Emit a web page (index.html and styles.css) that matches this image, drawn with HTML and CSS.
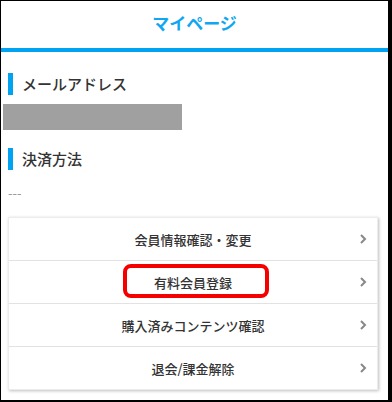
FILE: index.html
```html
<!DOCTYPE html>
<html lang="ja">
<head>
<meta charset="utf-8">
<link rel="stylesheet" href="styles.css">
</head>
<body>
<div class="frame">
  <header class="header">
    <h1 class="title">マイページ</h1>
  </header>
  <main class="content">
    <h2 class="section-title">メールアドレス</h2>
    <div class="masked"></div>
    <h2 class="section-title second">決済方法</h2>
    <p class="empty">---</p>
    <ul class="menu">
      <li class="menu-item"><span class="label">会員情報確認・変更</span><svg class="chev" width="8" height="12" viewBox="0 0 8 12"><polyline points="2,2 6,6 2,10" fill="none" stroke="#888" stroke-width="2"/></svg></li>
      <li class="menu-item"><span class="label">有料会員登録</span><svg class="chev" width="8" height="12" viewBox="0 0 8 12"><polyline points="2,2 6,6 2,10" fill="none" stroke="#888" stroke-width="2"/></svg><span class="highlight"></span></li>
      <li class="menu-item"><span class="label">購入済みコンテンツ確認</span><svg class="chev" width="8" height="12" viewBox="0 0 8 12"><polyline points="2,2 6,6 2,10" fill="none" stroke="#888" stroke-width="2"/></svg></li>
      <li class="menu-item"><span class="label">退会/課金解除</span><svg class="chev" width="8" height="12" viewBox="0 0 8 12"><polyline points="2,2 6,6 2,10" fill="none" stroke="#888" stroke-width="2"/></svg></li>
    </ul>
  </main>
</div>
</body>
</html>
```
FILE: styles.css
```css
html, body {
  margin: 0;
  padding: 0;
  background: #fff;
}
body {
  font-family: "Noto Sans CJK JP", "Noto Sans", sans-serif;
  color: #333;
}
.frame {
  box-sizing: border-box;
  width: 392px;
  height: 402px;
  border-top: 1px solid #000;
  border-left: 1px solid #000;
  border-right: 4px solid #000;
  border-bottom: 2px solid #000;
  overflow: hidden;
}
.header {
  height: 47px;
  border-bottom: 4px solid #00a3f2;
  display: flex;
  align-items: center;
  justify-content: center;
}
.title {
  margin: 0;
  font-size: 17px;
  font-weight: 700;
  color: #10a6f0;
  line-height: 1;
  padding-bottom: 4px;
}
.content {
  padding: 0 0 0 2px;
}
.section-title {
  margin: 21px 0 0 5px;
  border-left: 5px solid #00a3f2;
  padding-left: 9px;
  font-size: 15px;
  font-weight: 500;
  height: 22px;
  line-height: 22px;
  color: #333;
}
.section-title.second {
  margin-top: 18px;
}
.masked {
  margin-top: 9px;
  width: 179px;
  height: 26px;
  background: #a0a0a0;
}
.empty {
  margin: 14px 0 0 5px;
  font-size: 13px;
  line-height: 18px;
  color: #999;
}
.menu {
  list-style: none;
  margin: 15px 0 0 5px;
  padding: 0;
  width: 370px;
  box-sizing: border-box;
  border: 1px solid #ececec;
  box-shadow: 1px 1px 3px rgba(0, 0, 0, 0.25);
  background: #fff;
}
.menu-item {
  position: relative;
  height: 42px;
  display: flex;
  align-items: center;
  justify-content: center;
  border-top: 1px solid #e2e2e2;
  font-size: 13px;
  font-weight: 500;
  color: #333;
}
.menu-item:first-child {
  border-top: none;
}
.chev {
  position: absolute;
  right: 10px;
  top: 15px;
}
.highlight {
  position: absolute;
  left: 114px;
  top: 3px;
  width: 146px;
  height: 34px;
  box-sizing: border-box;
  border: 4px solid #f50000;
  border-radius: 8px;
}
```
